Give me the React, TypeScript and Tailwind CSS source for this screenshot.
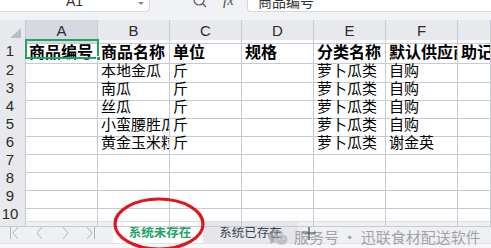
import React from "react"

const cols = ["A", "B", "C", "D", "E", "F", ""]

const rows: string[][] = [
  ["商品编号", "商品名称", "单位", "规格", "分类名称", "默认供应商", "助记码"],
  ["", "本地金瓜", "斤", "", "萝卜瓜类", "自购", ""],
  ["", "南瓜", "斤", "", "萝卜瓜类", "自购", ""],
  ["", "丝瓜", "斤", "", "萝卜瓜类", "自购", ""],
  ["", "小蛮腰胜瓜", "斤", "", "萝卜瓜类", "自购", ""],
  ["", "黄金玉米粒", "斤", "", "萝卜瓜类", "谢金英", ""],
  ["", "", "", "", "", "", ""],
  ["", "", "", "", "", "", ""],
  ["", "", "", "", "", "", ""],
  ["", "", "", "", "", "", ""],
]

const cjk = "font-['Noto_Sans_CJK_SC','Noto_Sans',sans-serif]"
const latin = "font-['Liberation_Sans','DejaVu_Sans',sans-serif]"

export default function App() {
  return (
    <div className={`relative w-[491px] h-[248px] overflow-hidden bg-white ${cjk}`}>
      {/* formula bar */}
      <div className="h-[20px] bg-[#f1f2f5] flex items-start">
        <div className="w-[150px] h-[12px] bg-white border-b border-r border-[#d5d8de] rounded-br-[4px] overflow-hidden relative flex justify-center">
          <span className={`${latin} text-[14px] leading-[14px] text-[#333] mt-[-6px]`}>A1</span>
          <svg className="absolute right-[5px] top-[2px]" width="6" height="4" viewBox="0 0 6 4">
            <path d="M0 0 L3 3 L6 0 Z" fill="#888" />
          </svg>
        </div>
        <div className="w-[97px] h-[12px] flex items-start overflow-hidden">
          <svg className="ml-[43px] mt-[-6px]" width="14" height="14" viewBox="0 0 14 14" fill="none" stroke="#555" strokeWidth="1.2">
            <circle cx="6" cy="6" r="5" />
            <path d="M9.6 9.6 L13 13" />
          </svg>
          <span className="ml-[16px] mt-[-7px] text-[15px] italic font-['Liberation_Serif',serif] text-[#555] leading-[15px]">fx</span>
        </div>
        <div className="flex-1 h-[12px] bg-white border-b border-l border-[#d5d8de] rounded-bl-[4px] overflow-hidden">
          <span className="ml-[10px] block mt-[-7px] text-[14px] leading-[16px] text-[#333]">商品编号</span>
        </div>
      </div>

      {/* column headers */}
      <div className="grid grid-cols-[26px_repeat(6,72px)_1fr] h-[20px] bg-[#e8e9ed]">
        <div className="border-r border-b border-[#c6cad4] relative">
          <svg className="absolute left-[10px] top-[8px]" width="11" height="10" viewBox="0 0 11 10">
            <path d="M11 0 L11 10 L0 10 Z" fill="#b9bdc4" />
          </svg>
        </div>
        {cols.map((c, i) => (
          <div
            key={i}
            className={`${latin} border-r border-b border-[#c6cad4] flex items-center justify-center text-[15px] text-[#2b2b2b] ${i === 0 ? "bg-[#d6d9df]" : ""}`}
          >
            {c}
          </div>
        ))}
      </div>

      {/* rows */}
      <div className="relative">
        {rows.map((r, ri) => (
          <div
            key={ri}
            className={`grid grid-cols-[26px_repeat(6,72px)_1fr] ${ri === 0 ? "h-[19px]" : "h-[18px]"}`}
          >
            <div className={`${latin} bg-[#e8e9ed] border-r border-b border-[#c6cad4] flex items-center justify-center pr-[5px] text-[15px] text-[#2b2b2b]`}>
              {ri + 1}
            </div>
            {r.map((v, ci) => (
              <div
                key={ci}
                className={`border-r border-b border-[#c6cad4] overflow-hidden whitespace-nowrap pl-[3px] flex items-center text-black ${ri === 0 ? "text-[16px] font-bold" : "text-[15px]"}`}
              >
                {v}
              </div>
            ))}
          </div>
        ))}
        {/* selected cell A1 */}
        <div className="absolute left-[25px] top-[-1px] w-[74px] h-[20px] border-2 border-[#21a366]" />
        <div className="absolute left-[96px] top-[16px] w-[5px] h-[5px] bg-[#21a366] border border-white" />
      </div>

      {/* sheet tabs */}
      <div className="h-[22px] bg-[#eff0f3] flex items-stretch border-t border-[#dcdee3]">
        <div className="w-[113px] flex items-center">
          <svg width="100" height="14" viewBox="0 0 100 14" fill="none" stroke="#aeb2ba" strokeWidth="1">
            <path d="M10.5 1 L10.5 13" />
            <path d="M18 1 L13 7 L18 13" />
            <path d="M42 1 L37 7 L42 13" />
            <path d="M63 1 L68 7 L63 13" />
            <path d="M87 1 L92 7 L87 13" />
            <path d="M94.5 1 L94.5 13" />
          </svg>
        </div>
        <div className="w-[90px] bg-white flex items-center justify-center pl-[4px] text-[12.5px] font-semibold text-[#21a366]">
          系统未存在
        </div>
        <div className="w-[95px] bg-[#e4e6eb] flex items-center justify-center text-[12.5px] text-[#3c4150]">
          系统已存在
        </div>
        <div className="w-[22px] flex items-center justify-center">
          <svg width="14" height="14" viewBox="0 0 14 14" stroke="#3c4150" strokeWidth="1.2">
            <path d="M7 0 L7 14 M0 7 L14 7" />
          </svg>
        </div>
        <div className="flex-1" />
      </div>
      <div className="h-[5px] bg-[#f7f7f9] border-t border-[#e1e3e8]" />

      {/* watermark */}
      <div className="absolute left-[268px] top-[226px] flex items-center gap-[6px] opacity-60">
        <svg width="20" height="17" viewBox="0 0 20 17">
          <ellipse cx="8" cy="7" rx="8" ry="6.5" fill="#8a8a8a" />
          <path d="M3 11 L2 15 L7 12.5 Z" fill="#8a8a8a" />
          <ellipse cx="13.5" cy="10.5" rx="6.5" ry="5.5" fill="#a8a8a8" stroke="#eee" strokeWidth="0.8" />
          <circle cx="5.5" cy="5.5" r="1" fill="#eee" />
          <circle cx="10.5" cy="5.5" r="1" fill="#eee" />
          <circle cx="11.5" cy="10" r="0.8" fill="#eee" />
          <circle cx="15.5" cy="10" r="0.8" fill="#eee" />
        </svg>
        <span className="text-[15px] text-[#6f6f6f] whitespace-nowrap">服务号 · 迅联食材配送软件</span>
      </div>

      {/* red circle annotation */}
      <svg className="absolute left-[108px] top-[196px]" width="104" height="56" viewBox="0 0 104 56" fill="none">
        <ellipse cx="51" cy="28" rx="44" ry="25" stroke="#e0161b" strokeWidth="3.2" />
      </svg>
    </div>
  )
}
